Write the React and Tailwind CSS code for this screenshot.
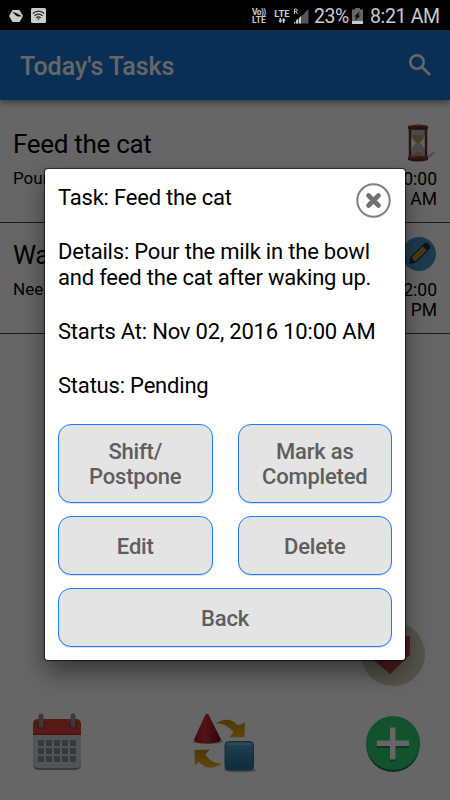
import { useState } from "react";

const tasks = [
  {
    title: "Feed the cat",
    details: "Pour",
    time: "10:00",
    period: "AM",
    icon: <Hourglass />,
  },
  {
    title: "Wa",
    details: "Nee",
    time: "12:00",
    period: "PM",
    icon: <Pencil />,
  },
];

function StatusBar() {
  return (
    <div className="flex h-[30px] shrink-0 items-center bg-black pt-px text-[#cbcbcb]">
      <svg className="ml-[9px] h-[14px] w-[14px]" viewBox="0 0 14 14">
        <path d="M3.500 1h7L14 7l-3.500 6h-7L0 7z" fill="#cbcbcb" />
        <path d="M3.500 3l3 .8 6.500 3.400-4.500 .3-2-1.500z" fill="#000" />
      </svg>
      <svg className="ml-[8px] h-[15px] w-[15px]" viewBox="0 0 15 15">
        <rect width="15" height="15" rx="1.500" fill="#cbcbcb" />
        <g fill="none" stroke="#222" strokeWidth="1.200">
          <path d="M1.800 5.500Q7.500 .8 13.200 5.500" />
          <path d="M3.500 7.700Q7.500 4.400 11.500 7.700" />
          <path d="M5.300 9.700Q7.500 7.900 9.700 9.700" />
        </g>
        <path d="M6.200 10.500h2.600l-1.300 1.800z" fill="#222" />
      </svg>
      <div className="ml-[206px] w-[16px] text-[8.500px] leading-[8px] font-bold">
        <div className="tracking-[-0.6px] whitespace-nowrap">Vo))</div>
        <div>LTE</div>
      </div>
      <div className="ml-[5px] flex w-[18px] flex-col items-center">
        <span className="text-[9.500px] leading-[9px] font-bold">LTE</span>
        <svg className="h-[5px] w-[10px]" viewBox="0 0 10 6" fill="#cbcbcb">
          <path d="M2 0h2v3h1.500L3 6 .5 3H2zM6 6h2V3h1.500L7 0 4.500 3H6z" />
        </svg>
      </div>
      <svg className="ml-[2px] h-[16px] w-[16px]" viewBox="0 0 16 16">
        <path d="M15.500 1v14.500H1z" fill="#555" />
        <path d="M1 15.500v-1l1-1v2zM3 15.500v-3l2-2v5zM6 15.500V10l2-2v7.500z" fill="#cbcbcb" />
        <path d="M1.500 6V1h1.500q1.200 0 1.200 1.200T3 3.400H1.500M3 3.500L4.500 6" fill="none" stroke="#cbcbcb" />
      </svg>
      <span className="ml-[5px] w-[35px] pt-[3px] text-[19.500px] leading-[22px] tracking-[-0.5px]">23%</span>
      <svg className="ml-[3px] h-[16px] w-[11px]" viewBox="0 0 11 16">
        <path d="M3 0h5v1.500h3V16H0V1.500h3z" fill="#666" />
        <path d="M0 13h11v3H0z" fill="#cbcbcb" />
        <path d="M8 3L2.500 8.500h2L3 12.500l5.500-5H6z" fill="#000" />
      </svg>
      <span className="ml-[7px] pt-[3px] text-[19.500px] leading-[22px] tracking-[-0.35px] whitespace-nowrap">
        8:21 AM
      </span>
    </div>
  );
}

function Hourglass() {
  return (
    <svg className="h-[38px] w-[32px]" viewBox="0 0 32 38">
      <path d="M21 34l6-5 5-2-5 6-6 3z" fill="#c2c2c2" />
      <path d="M7 5h14v5q0 5-5 9 5 4 5 9v5H7v-5q0-5 5-9-5-4-5-9z" fill="#aebccb" />
      <path d="M8 11h12q-1 4-5 8h-2q-4-3-5-8zM8 33q1-4 6-6 5 2 6 6z" fill="#b89b64" />
      <path d="M13.500 19h1v9h-1z" fill="#d6bb7e" />
      <path d="M6 4v30M22 4v30" stroke="#6b3021" strokeWidth="2.500" />
      <path d="M4 2q10-3 20 0v3q-10 2-20 0zM4 33q10-2 20 0v3q-10 3-20 0z" fill="#672c1e" />
      <path d="M5 2.500q9-2 18 0M5 34q9-2 18 0" fill="none" stroke="#a5604a" />
    </svg>
  );
}

function Pencil() {
  return (
    <svg className="h-[34px] w-[34px]" viewBox="0 0 34 34">
      <circle cx="17" cy="17" r="17" fill="#4796c2" />
      <g transform="rotate(45 17 17)">
        <path d="M13.200 5.500q0-2 2-2h3.600q2 0 2 2v20L17 31l-3.800-5.500z" fill="#183344" />
        <path d="M14.400 9h5.200v16h-5.200z" fill="#dfa12a" />
        <path d="M16.200 9v16M18 9v16" stroke="#8f6114" strokeWidth=".7" />
      </g>
    </svg>
  );
}

function TaskRow({ task }) {
  return (
    <div className="flex h-[111px] justify-between border-b-[1.500px] border-[#444] pr-[13px] pl-[13px]">
      <div className="whitespace-nowrap">
        <div className="mt-[15px] text-[26px] leading-[34px] tracking-[-0.3px]">{task.title}</div>
        <div className="mt-[7px] text-[17px] leading-[20px]">{task.details}</div>
      </div>
      <div className="flex w-[50px] shrink-0 flex-col items-end text-right text-[17.500px] leading-[20px]">
        <div className="mt-[12px] mb-[7px] flex h-[38px] items-center pr-px">{task.icon}</div>
        <div>{task.time}</div>
        <div>{task.period}</div>
      </div>
    </div>
  );
}

function Calendar() {
  return (
    <svg className="h-[58px] w-[48px]" viewBox="0 0 48 58">
      <rect y="8" width="48" height="49" rx="5" fill="#8c9294" />
      <path d="M0 20h48v30q0 5-5 5H5q-5 0-5-5z" fill="#cdd2d5" />
      <path d="M0 22v-11q0-5 5-5h38q5 0 5 5v11z" fill="#df4238" />
      <path d="M0 20.500h48v1.500H0z" fill="#b52d26" />
      <circle cx="8" cy="11.500" r="4" fill="#a92c27" />
      <circle cx="40" cy="11.500" r="4" fill="#a92c27" />
      <path d="M8 3v9M40 3v9" stroke="#8b9193" strokeWidth="5" strokeLinecap="round" />
      {[27, 35, 43].map((y) =>
        [5, 13, 21, 29, 37].map((x) => (
          <rect key={`${x}-${y}`} x={x} y={y} width="6" height="6" fill="#8b9193" />
        ))
      )}
    </svg>
  );
}

function Shapes() {
  return (
    <svg className="h-[60px] w-[64px]" viewBox="0 0 64 60">
      <defs>
        <linearGradient id="cone">
          <stop offset="0" stopColor="#9f1c20" />
          <stop offset=".4" stopColor="#d33136" />
          <stop offset="1" stopColor="#730d11" />
        </linearGradient>
        <linearGradient id="cube" x2="0" y2="1">
          <stop offset="0" stopColor="#58a7c9" />
          <stop offset=".5" stopColor="#3b86ac" />
          <stop offset="1" stopColor="#286e95" />
        </linearGradient>
        <linearGradient id="arrow" x2="0" y2="1">
          <stop offset="0" stopColor="#c08a18" />
          <stop offset="1" stopColor="#edb21d" />
        </linearGradient>
      </defs>
      <ellipse cx="15" cy="27.500" rx="15.500" ry="2.500" fill="#bbb" />
      <path d="M12 1.500q2-3.500 4 0l12 24q-1 4-14 4T1 25.500z" fill="url(#cone)" />
      <path d="M22.500 9.500Q36 1 45 11.500l7-3-.5 14.500-15.500 .500 4.500-5Q34 9 22.500 9.500z" fill="url(#arrow)" />
      <path d="M29.500 49Q16 59 6 48l-4 3.500L1.500 36l15.500-.5-4.500 5Q19 51 29.500 49z" fill="url(#arrow)" />
      <ellipse cx="47" cy="56" rx="16" ry="2.500" fill="#bbb" />
      <rect x="32" y="27.500" width="28.500" height="28.500" rx="3.500" fill="url(#cube)" stroke="#2e7397" />
      <path d="M34 30h24.500" stroke="#83bfda" strokeWidth="1.500" />
    </svg>
  );
}

function AddButton() {
  return (
    <svg className="mt-[3px] h-[56px] w-[54px]" viewBox="0 0 54 56">
      <circle cx="27" cy="29.300" r="26.700" fill="#1c7540" />
      <circle cx="27" cy="27" r="27" fill="#2ecc71" />
      <path d="M24 13h5.500v32.500H24zM10.700 26h32.300v6H10.700z" fill="#1f8a4a" />
      <path d="M24 11.500h5.500v13H43V30H29.500v13.500H24V30H10.700v-5.500H24z" fill="#fff" />
    </svg>
  );
}

function HeartButton() {
  return (
    <svg className="h-[64px] w-[64px]" viewBox="0 0 64 64">
      <circle cx="32" cy="32" r="32" fill="#d2d2be" />
      <path d="M29 52L9 35V14h14l6 5 6-5h14v19z" fill="#bd4750" />
    </svg>
  );
}

function DialogButton({ children, className, onClick }) {
  return (
    <button
      onClick={onClick}
      className={`flex items-center justify-center rounded-[13px] border border-[#187cff] bg-[#e4e4e4] pt-px text-[22px] leading-[25px] font-medium tracking-[-0.2px] text-[#5e5e5e] shadow-[0_1px_1px_#0002] ${className}`}
    >
      {children}
    </button>
  );
}

function TaskDialog({ onClose }) {
  return (
    <div className="absolute inset-x-0 top-[30px] bottom-0 bg-black/60 pt-[139px] pl-[45px]">
      <div className="relative h-[491px] w-[360px] rounded-[3px] bg-white px-[13px] pt-[16px] text-[22px] leading-[26px] tracking-[-0.2px] text-black shadow-[0_12px_24px_#0007,0_0_1px_1px_#0009]">
        <button onClick={onClose} className="absolute top-[14px] right-[14px]">
          <svg className="h-[35px] w-[35px]" viewBox="0 0 35 35">
            <circle cx="17.500" cy="17.500" r="16.200" fill="#fff" stroke="#808080" strokeWidth="2" />
            <path d="M12.500 12.500l10 10M22.500 12.500l-10 10" stroke="#707070" strokeWidth="4.600" strokeLinecap="round" />
          </svg>
        </button>
        <p>Task: Feed the cat</p>
        <p className="mt-[28px] whitespace-nowrap">
          Details: Pour the milk in the bowl
          <br />
          and feed the cat after waking up.
        </p>
        <p className="mt-[28px] whitespace-nowrap">Starts At: Nov 02, 2016 10:00 AM</p>
        <p className="mt-[28px]">Status: Pending</p>
        <div className="mt-[25px] grid grid-cols-2 gap-x-[25px] gap-y-[13px]">
          <DialogButton className="h-[79px]">
            Shift/
            <br />
            Postpone
          </DialogButton>
          <DialogButton className="h-[79px]">
            Mark as
            <br />
            Completed
          </DialogButton>
          <DialogButton className="h-[59px]">Edit</DialogButton>
          <DialogButton className="h-[59px]">Delete</DialogButton>
          <DialogButton className="col-span-2 h-[59px]" onClick={onClose}>
            Back
          </DialogButton>
        </div>
      </div>
    </div>
  );
}

export default function App() {
  const [open, setOpen] = useState(true);

  return (
    <div className="relative flex h-[800px] w-[450px] flex-col overflow-hidden bg-white font-['Roboto',sans-serif] text-black">
      <StatusBar />
      <header className="flex h-[70px] shrink-0 items-center justify-between bg-[#1976d2] pr-[19px] pl-[20px] text-white shadow-[0_3px_6px_#0006]">
        <h1 className="pt-[3px] text-[25px] font-medium tracking-[-0.05px]">Today's Tasks</h1>
        <svg className="h-[22px] w-[22px]" viewBox="0 0 22 22" fill="none" stroke="#fff" strokeWidth="2.600">
          <circle cx="8" cy="8" r="6.700" />
          <path d="M13 13l8 8" />
        </svg>
      </header>
      <main className="mt-[12px] flex-1">
        {tasks.map((task) => (
          <TaskRow key={task.title} task={task} />
        ))}
      </main>
      <div className="flex justify-end pr-[25px]">
        <HeartButton />
      </div>
      <footer className="mt-[27px] flex h-[87px] shrink-0 items-start justify-between pr-[30px] pl-[33px]">
        <Calendar />
        <div className="mt-px pl-[3px]">
          <Shapes />
        </div>
        <AddButton />
      </footer>
      {open && <TaskDialog onClose={() => setOpen(false)} />}
    </div>
  );
}
